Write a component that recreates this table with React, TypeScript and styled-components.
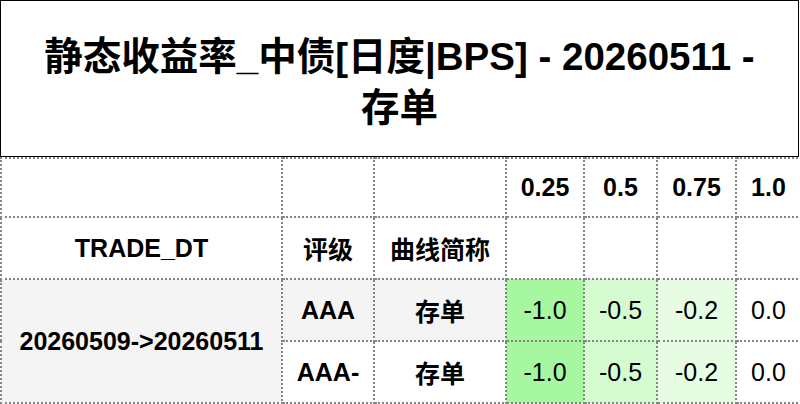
import React from "react";
import styled, { createGlobalStyle } from "styled-components";

const GlobalStyle = createGlobalStyle`
  html, body {
    margin: 0;
    padding: 0;
    background: #ffffff;
  }
  body {
    font-family: "Liberation Sans", Arial, "Noto Sans CJK SC", sans-serif;
    color: #000000;
  }
`;

const Page = styled.div`
  width: 800px;
`;

const Title = styled.div`
  width: 799px;
  box-sizing: border-box;
  border: 1px solid #000000;
  padding: 30px 38px 23px;
  text-align: center;
  font-size: 38.5px;
  font-weight: 700;
  line-height: 51px;
`;

const Table = styled.table`
  width: 800px;
  border-collapse: collapse;
  table-layout: fixed;
  font-size: 25px;
`;

const Row = styled.tr<{ $h: number }>`
  height: ${(p) => p.$h}px;
`;

const Th = styled.th`
  border: 2px dotted #858585;
  padding: 0;
  text-align: center;
  vertical-align: middle;
  font-weight: 700;
  background: #ffffff;
`;

const Td = styled.td<{ $bg?: string; $bold?: boolean }>`
  border: 2px dotted #858585;
  padding: 0;
  text-align: center;
  vertical-align: middle;
  font-weight: ${(p) => (p.$bold ? 700 : 400)};
  background: ${(p) => p.$bg || "#ffffff"};
`;

const tenors = ["0.25", "0.5", "0.75", "1.0"];
const widths = [281, 92, 132, 78, 73, 79, 65];

// cell colour by value, stronger green for larger drops
const shade: Record<string, string> = {
  "-1.0": "#a7f7a0",
  "-0.5": "#d5fcd1",
  "-0.2": "#e6fde3",
  "0.0": "#ffffff",
};

const rows = [
  { grade: "AAA", curve: "存单", values: ["-1.0", "-0.5", "-0.2", "0.0"], stripe: "#f4f4f4" },
  { grade: "AAA-", curve: "存单", values: ["-1.0", "-0.5", "-0.2", "0.0"], stripe: "#ffffff" },
];

export default function App() {
  return (
    <Page>
      <GlobalStyle />
      <Title>静态收益率_中债[日度|BPS] - 20260511 - 存单</Title>
      <Table>
        <colgroup>
          {widths.map((w, i) => (
            <col key={i} style={{ width: w }} />
          ))}
        </colgroup>
        <thead>
          <Row $h={59}>
            <Th />
            <Th />
            <Th />
            {tenors.map((t) => (
              <Th key={t}>{t}</Th>
            ))}
          </Row>
          <Row $h={62}>
            <Th>TRADE_DT</Th>
            <Th>评级</Th>
            <Th>曲线简称</Th>
            {tenors.map((t) => (
              <Th key={t} />
            ))}
          </Row>
        </thead>
        <tbody>
          {rows.map((r, i) => (
            <Row $h={62} key={r.grade}>
              {i === 0 && (
                <Td rowSpan={2} $bold $bg="#f4f4f4">
                  20260509-&gt;20260511
                </Td>
              )}
              <Td $bold $bg={r.stripe}>{r.grade}</Td>
              <Td $bold $bg={r.stripe}>{r.curve}</Td>
              {r.values.map((v, j) => (
                <Td key={j} $bg={shade[v]}>
                  {v}
                </Td>
              ))}
            </Row>
          ))}
        </tbody>
      </Table>
    </Page>
  );
}
